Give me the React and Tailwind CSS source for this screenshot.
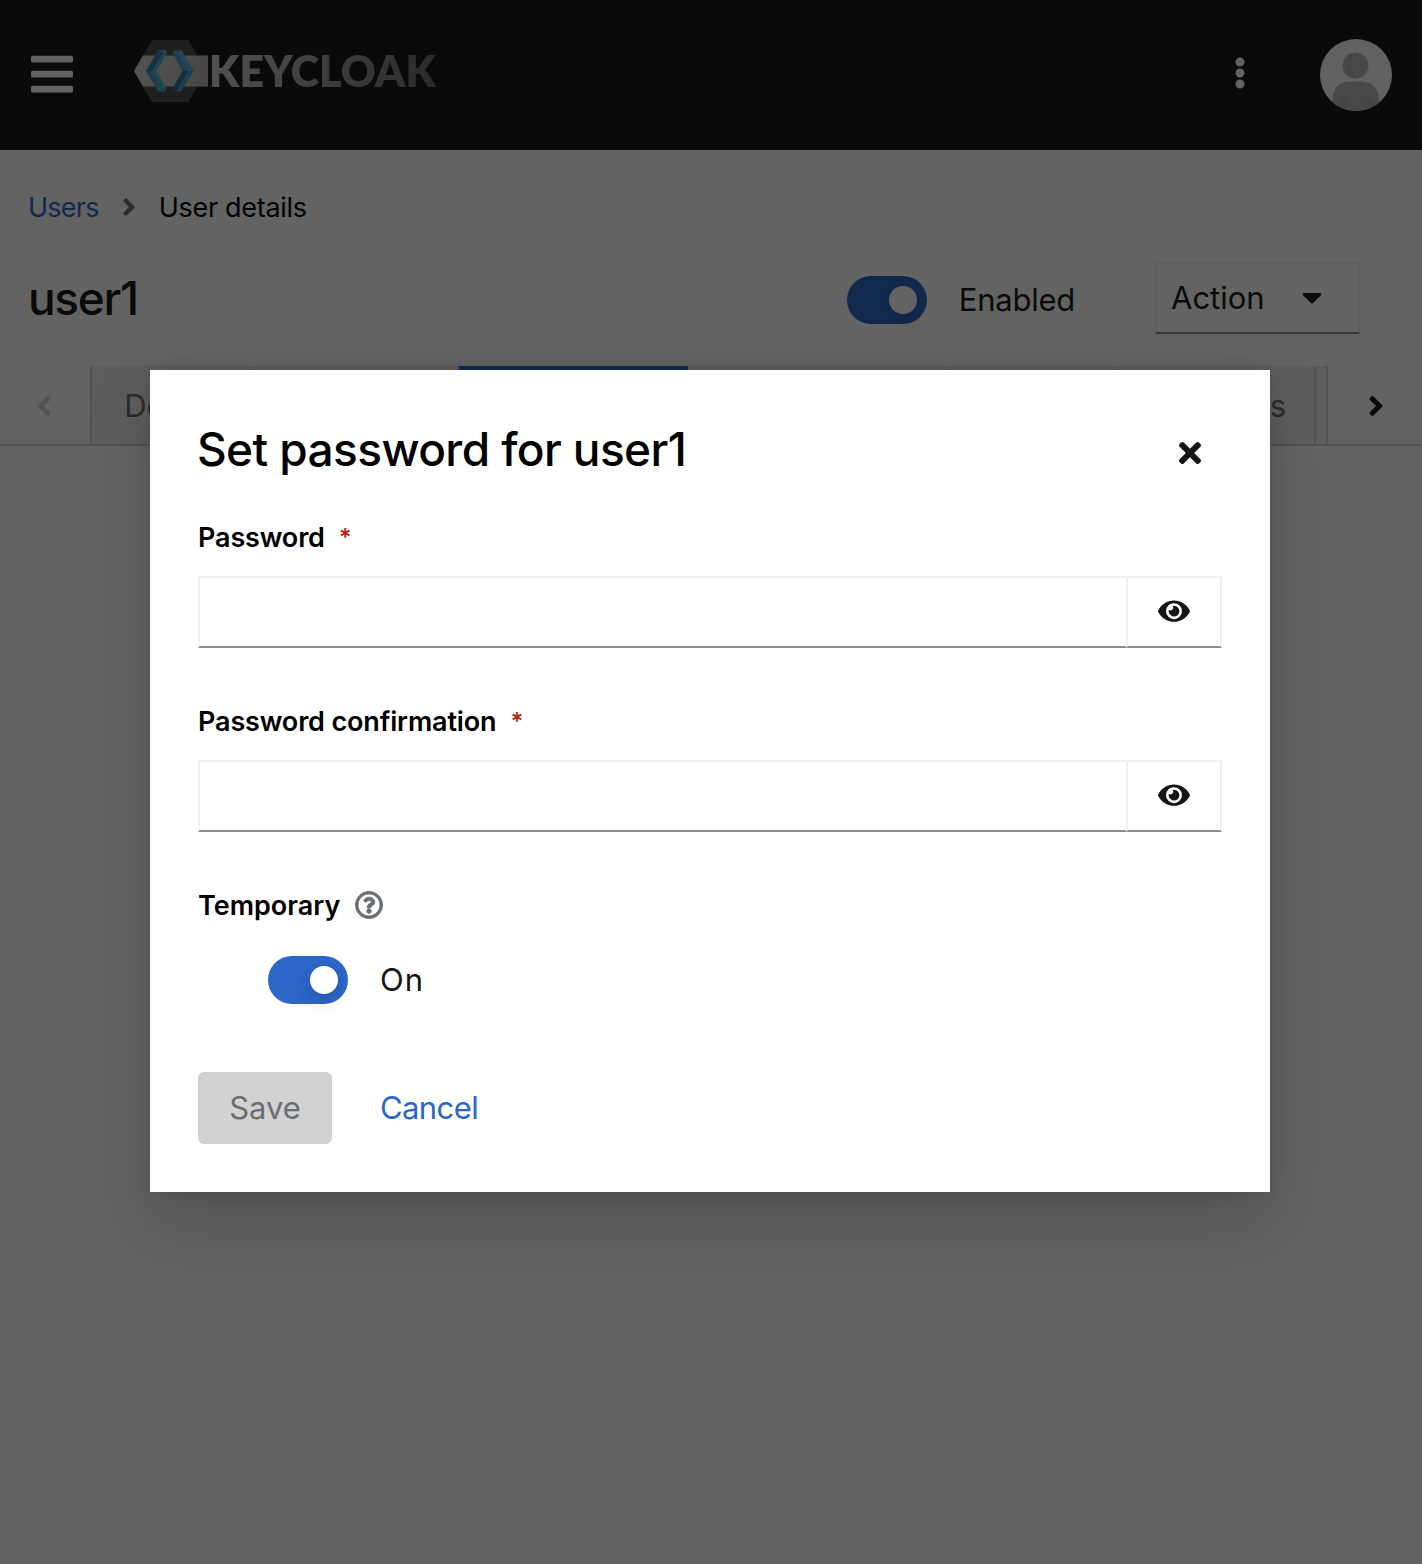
import { FaAngleLeft, FaAngleRight, FaBars, FaCaretDown, FaEllipsisV, FaEye, FaRegQuestionCircle, FaTimes } from "react-icons/fa";

function Logo() {
  return (
    <div className="flex h-[62px] items-center">
      <svg width="75" height="62" viewBox="0 0 75 62" className="shrink-0">
        <defs>
          <linearGradient id="bar" x1="0" y1="0" x2="1" y2="0">
            <stop offset="0" stopColor="#d4d4d4" />
            <stop offset="1" stopColor="#b9b9b9" />
          </linearGradient>
        </defs>
        <path d="M18 0H54.500L72.500 31L54.500 62H18L0 31Z" fill="#4d4d4d" />
        <path d="M9 15.500H74V46.500H9L0 31Z" fill="url(#bar)" />
        <path d="M36 31L59.500 31L50 46.500H74V15.500H60Z" fill="#a8a8a8" opacity="0.2" />
        <path d="M24.500 10.200H32L33 13L22.500 31L32.500 48.500L31 51.200H24L12 31Z" fill="#52b1d6" />
        <path d="M24.500 10.200L29.500 12.500L18 31H12Z" fill="#32809f" />
        <path d="M12 31H18L29.500 49L31 51.200H24Z" fill="#469fc4" />
        <path d="M40 10.200H47.500L59.500 31L47.500 51.200H40L38.500 48.500L48.500 31L38.500 13Z" fill="#469fc4" />
        <path d="M47.500 10.200L42.500 13L54 31H59.500Z" fill="#52b1d6" />
        <path d="M48.500 31H54L43.500 50L40 51.200L38.500 48.500Z" fill="#2f7792" />
      </svg>
      <span className="bg-gradient-to-r from-[#d0d0d0] to-[#6e6e6e] bg-clip-text font-['Lato',sans-serif] text-[43px] leading-[62px] font-extrabold text-transparent">
        KEYCLOAK
      </span>
    </div>
  );
}

function Avatar() {
  return (
    <svg width="72" height="72" viewBox="0 0 72 72" className="shrink-0">
      <defs>
        <clipPath id="face"><circle cx="36" cy="36" r="36" /></clipPath>
      </defs>
      <g clipPath="url(#face)">
        <rect width="72" height="72" fill="#fdfdfd" />
        <circle cx="35.500" cy="26.500" r="13" fill="#b9b9b9" />
        <path d="M37 13.600a13 13 0 0 0 0 25.800a18 18 0 0 1 0-25.800Z" fill="#b0b0b0" />
        <path d="M12.500 66V60C13 49 19 43 29 42.800Q36 42.200 43 42.800C53 43 58.500 50 59 60V72H12.500Z" fill="#b9b9b9" />
        <path d="M27 58Q20 60 20 72H27Q26 66 27 58ZM46 59Q55 60 56 66L50 72H48Q48 64 46 59Z" fill="#adadad" />
      </g>
    </svg>
  );
}

function Switch() {
  return (
    <span className="flex h-12 w-20 shrink-0 items-center justify-end rounded-full bg-[#2b66c8] pr-2.5">
      <span className="size-7 rounded-full bg-white shadow-[0_8px_16px_rgba(3,3,3,0.12),0_0_8px_rgba(3,3,3,0.06)]" />
    </span>
  );
}

function Tab({ label, width, current }) {
  return (
    <button
      className={
        current
          ? "flex h-20 shrink-0 items-center justify-center border-t-6 border-[#2b66c8] bg-white pb-1.5"
          : "flex h-20 shrink-0 items-center justify-center border-b-2 border-r-2 border-[#d2d2d2] bg-[#f0f0f0] pt-0.5 pl-1 text-[#6a6e73]"
      }
      style={{ width }}
    >
      {label}
    </button>
  );
}

function PasswordField({ label }) {
  return (
    <div className="mb-12 h-[136px]">
      <div className="flex h-[42px] items-center pt-0.5 text-[27px] font-semibold text-black">
        <span className="tracking-[-0.15px]">{label}</span>
        <span className="ml-3.5 text-[24px] font-semibold text-[#b8291a]">*</span>
      </div>
      <div className="mt-[18px] flex h-[72px]">
        <input type="password" className="min-w-0 flex-1 border-2 border-r-0 border-[#f0f0f0] border-b-[#8a8d90] outline-none" />
        <button className="flex w-24 items-center justify-center border-2 border-[#f0f0f0] border-b-[#8a8d90] pb-0.5">
          <FaEye className="h-[28.400px] w-8" />
        </button>
      </div>
    </div>
  );
}

export default function App() {
  return (
    <div className="relative h-[1564px] w-[1422px] overflow-hidden bg-white font-['Inter',sans-serif] text-[31px] text-[#151515]">
      <header className="flex h-[150px] items-center bg-[#151515] pr-[30px] pl-[31px] text-white">
        <FaBars className="mt-[-2px] h-12 w-[42px]" />
        <div className="mt-[-9px] ml-[61px] flex-1"><Logo /></div>
        <FaEllipsisV className="mt-[-4px] mr-16 size-8" />
        <Avatar />
      </header>

      <nav className="mt-9 flex h-[42px] items-center pl-7 text-[27px]">
        <a className="pt-0.5 tracking-[-0.75px] text-[#2b66c8]">Users</a>
        <FaAngleRight className="ml-4 size-7 text-[#6a6e73]" />
        <span className="ml-4 pt-0.5 tracking-[-0.3px] text-black">User details</span>
      </nav>

      <div className="mt-[34px] flex h-[72px] items-center pr-[62px] pl-7">
        <h1 className="flex-1 text-[46px] font-medium tracking-[-1.3px]">user1</h1>
        <div className="mt-1 flex items-center"><Switch /><span className="ml-8 tracking-[-0.250px]">Enabled</span></div>
        <button className="ml-20 flex h-[72px] w-[205px] items-center border-2 border-[#f0f0f0] border-b-[#8a8d90] pl-3.5">
          Action
          <FaCaretDown className="mt-[-2px] ml-[31px] size-8" />
        </button>
      </div>

      <div className="mt-8 flex h-20">
        <button className="flex w-[92px] items-center justify-center border-r-2 border-b-2 border-[#d2d2d2] pt-0.5 pr-0.5 text-[#d2d2d2]">
          <FaAngleLeft className="size-8" />
        </button>
        <div className="flex w-[1236px] overflow-hidden border-r-2 border-[#d2d2d2]">
          <Tab label="Details" width={162} />
          <Tab label="Attributes" width={205} />
          <Tab label="Credentials" width={229} current />
          <Tab label="Role mapping" width={260} />
          <Tab label="Groups" width={168} />
          <Tab label="Consents" width={200} />
          <Tab label="" width={20} />
        </div>
        <button className="flex flex-1 items-center justify-center border-b-2 border-[#d2d2d2] pt-0.5 pl-0.5">
          <FaAngleRight className="size-8" />
        </button>
      </div>

      <div className="absolute inset-0 bg-[rgba(3,3,3,0.62)] pt-[370px] pl-[150px]">
        <section className="h-[822px] w-[1120px] bg-white px-12 pt-12 shadow-[0_32px_64px_rgba(3,3,3,0.16),0_0_16px_rgba(3,3,3,0.1)]">
          <div className="flex h-[62px] items-center justify-between">
            <h2 className="ml-[-1px] text-[46px] font-medium tracking-[-0.6px] text-black">Set password for user1</h2>
            <button className="mt-2 mr-[21px]"><FaTimes className="h-8 w-[22px]" /></button>
          </div>
          <form className="mt-9">
            <PasswordField label="Password" />
            <PasswordField label="Password confirmation" />
            <div className="flex h-[42px] items-center text-[27px] font-semibold text-black">
              <span className="pt-0.5">Temporary</span>
              <FaRegQuestionCircle className="ml-[15px] size-7 overflow-visible stroke-[#6a6e73] [stroke-width:14] text-[#6a6e73]" />
            </div>
            <div className="mt-[30px] flex items-center pl-[70px]">
              <Switch />
              <span className="ml-8 tracking-[1px]">On</span>
            </div>
            <div className="mt-[68px] flex items-center">
              <button disabled className="h-[72px] w-[134px] rounded-md bg-[#d2d2d2] text-[#6a6e73]">Save</button>
              <a className="ml-12 tracking-[-0.6px] text-[#2b66c8]">Cancel</a>
            </div>
          </form>
        </section>
      </div>
    </div>
  );
}
